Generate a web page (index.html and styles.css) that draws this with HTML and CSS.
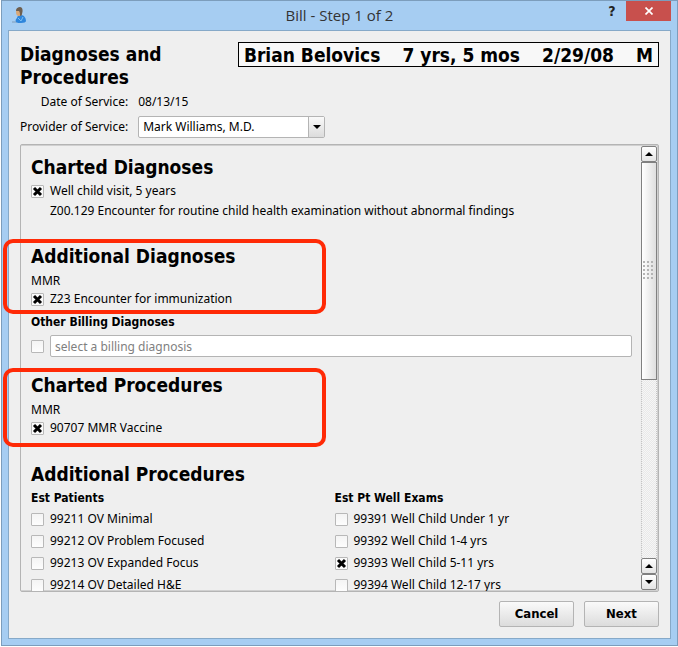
FILE: index.html
```
<!DOCTYPE html>
<html lang="en">
<head>
  <meta charset="UTF-8">
  <meta name="viewport" content="width=device-width, initial-scale=1.0">
  <title>Bill - Step 1 of 2</title>
  <link rel="stylesheet" href="styles.css">
</head>
<body>
<div class="window">
  <header class="titlebar">
    <svg class="app-icon" width="16" height="18" viewBox="0 0 16 18">
      <path d="M0 15h5" stroke="#7f9cba" stroke-width="1"/>
      <path d="M4 15c-1-2 0-3 1-4 0-2 2-3 4-3 3 0 5 3 5 6 0 1-2 2-5 2-2 0-4 0-5-1z" fill="#2f86dc"/>
      <path d="M6 11l3 3 2-4" stroke="#79bdf5" stroke-width="1" fill="none"/>
      <ellipse cx="7" cy="5" rx="3" ry="4" fill="#d9a878"/>
      <path d="M4 4c0-3 2-4 4-4 3 0 3 4 2 7 0 1-1 2-2 2 0-2 0-4-1-5-1 0-2 0-3 0z" fill="#6e5f50"/>
    </svg>
    <span class="title">Bill - Step 1 of 2</span>
    <div class="window-buttons">
      <button class="help" type="button" aria-label="Help">?</button>
      <button class="close" type="button" aria-label="Close">
        <svg width="8" height="8" viewBox="0 0 8 8"><path d="M0.5 0.5l7 7M7.5 0.5l-7 7" stroke="#fff" stroke-width="1.7"/></svg>
      </button>
    </div>
  </header>

  <main class="content">
    <div class="top">
      <h1>Diagnoses and Procedures</h1>
      <div class="patient">
        <span>Brian Belovics</span>
        <span>7 yrs, 5 mos</span>
        <span>2/29/08</span>
        <span>M</span>
      </div>
    </div>

    <div class="fields">
      <span class="label">Date of Service:</span>
      <span>08/13/15</span>
      <label class="label" for="provider">Provider of Service:</label>
      <div class="combo">
        <select id="provider">
          <option>Mark Williams, M.D.</option>
        </select>
        <span class="combo-arrow"><i class="arrow down"></i></span>
      </div>
    </div>

    <div class="panel">
      <div class="list">
        <section class="charted-diagnoses">
          <h2>Charted Diagnoses</h2>
          <label class="row"><input type="checkbox" checked>Well child visit, 5 years</label>
          <p class="detail">Z00.129 Encounter for routine child health examination without abnormal findings</p>
        </section>

        <section class="additional-diagnoses">
          <div class="group">
            <h2>Additional Diagnoses</h2>
            <p>MMR</p>
            <label class="row"><input type="checkbox" checked>Z23 Encounter for immunization</label>
            <div class="highlight"></div>
          </div>
          <h3>Other Billing Diagnoses</h3>
          <div class="billing">
            <input type="checkbox" aria-label="Use other billing diagnosis">
            <input type="text" aria-label="Other billing diagnosis" placeholder="select a billing diagnosis">
          </div>
        </section>

        <section class="charted-procedures group">
          <h2>Charted Procedures</h2>
          <p>MMR</p>
          <label class="row"><input type="checkbox" checked>90707 MMR Vaccine</label>
          <div class="highlight"></div>
        </section>

        <section class="additional-procedures">
          <h2>Additional Procedures</h2>
          <div class="columns">
            <div class="column">
              <h3>Est Patients</h3>
              <label class="row"><input type="checkbox">99211 OV Minimal</label>
              <label class="row"><input type="checkbox">99212 OV Problem Focused</label>
              <label class="row"><input type="checkbox">99213 OV Expanded Focus</label>
              <label class="row"><input type="checkbox">99214 OV Detailed H&amp;E</label>
            </div>
            <div class="column">
              <h3>Est Pt Well Exams</h3>
              <label class="row"><input type="checkbox">99391 Well Child Under 1 yr</label>
              <label class="row"><input type="checkbox">99392 Well Child 1-4 yrs</label>
              <label class="row"><input type="checkbox" checked>99393 Well Child 5-11 yrs</label>
              <label class="row"><input type="checkbox">99394 Well Child 12-17 yrs</label>
            </div>
          </div>
        </section>
      </div>

      <div class="scrollbar">
        <button type="button" aria-label="Scroll up"><i class="arrow up"></i></button>
        <div class="track">
          <div class="thumb"><i class="grip"></i></div>
        </div>
        <button type="button" aria-label="Scroll up"><i class="arrow up"></i></button>
        <button type="button" aria-label="Scroll down"><i class="arrow down"></i></button>
      </div>
    </div>

    <div class="actions">
      <button type="button">Cancel</button>
      <button type="button">Next</button>
    </div>
  </main>
</div>
</body>
</html>
```
FILE: styles.css
```
* {
  box-sizing: border-box;
}

body {
  margin: 0;
  height: 100vh;
  padding: 0 0 1px 1px;
  background-color: #fff;
  font-family: "Noto Sans", Tahoma, sans-serif;
  font-size: 12px;
  line-height: 18px;
  color: #000;
}

h1, h2, h3, p {
  margin: 0;
}

button, input, select {
  font: inherit;
  color: inherit;
  margin: 0;
}

.window {
  height: 100%;
  display: flex;
  flex-direction: column;
  padding: 0 6px 6px;
  border: 1px solid #7c9dbc;
  background-color: #a6cdf2;
}

/* title bar */
.titlebar {
  display: grid;
  grid-template-columns: 1fr auto 1fr;
  height: 29px;
  flex-shrink: 0;
}

.app-icon {
  margin: 6px 0 0 4px;
}

.title {
  font-family: "Open Sans", "Noto Sans", sans-serif;
  font-size: 15px;
  line-height: 29px;
  color: #333;
}

.window-buttons {
  display: flex;
  justify-content: flex-end;
}

.window-buttons button {
  height: 20px;
  padding: 0;
  border: none;
  background: none;
}

.window-buttons .help {
  width: 28px;
  font-family: "DejaVu Sans Condensed", Tahoma, sans-serif;
  font-size: 14px;
  font-weight: bold;
  color: #222;
}

.window-buttons .close {
  width: 45px;
  background-color: #c8504d;
}

/* dialog */
.content {
  flex: 1;
  min-height: 0;
  display: flex;
  flex-direction: column;
  padding: 11px;
  border: 1px solid #86a9c8;
  background-color: #efefef;
}

h1, h2, h3, .patient {
  font-family: "DejaVu Sans Condensed", Tahoma, sans-serif;
  font-size: 19px;
  font-weight: bold;
}

.top {
  display: flex;
  justify-content: space-between;
  align-items: flex-start;
}

h1 {
  width: 200px;
  padding-top: 1px;
  line-height: 23px;
}

.patient {
  display: flex;
  gap: 22px;
  padding: 1px 5px 0;
  border: 1px solid #000;
  background-color: #f8f8f8;
  line-height: 22px;
  white-space: nowrap;
}

.fields {
  display: grid;
  grid-template-columns: auto 1fr;
  column-gap: 10px;
  row-gap: 5px;
  align-items: center;
  margin: 4px 0 6px;
}

.label {
  text-align: right;
}

.combo {
  display: flex;
  width: 187px;
  height: 22px;
  border: 1px solid #b4b4b4;
  border-radius: 2px;
  background-color: #fff;
}

.combo select {
  flex: 1;
  appearance: none;
  padding: 0 4px;
  border: none;
  background: none;
}

.combo-arrow {
  display: flex;
  align-items: center;
  justify-content: center;
  width: 16px;
  border-left: 1px solid #b4b4b4;
  background: linear-gradient(#fafafa, #dcdcdc);
}

.arrow {
  width: 0;
  height: 0;
  border: 4px solid transparent;
}

.arrow.up {
  border-top: none;
  border-bottom-color: #000;
}

.arrow.down {
  border-bottom: none;
  border-top-color: #000;
}

/* list of diagnoses and procedures, cut off at the bottom only */
.panel {
  flex: 1;
  min-height: 0;
  display: flex;
  gap: 9px;
  padding-right: 1px;
  border: 1px solid #b4b4b4;
  border-radius: 2px;
  box-shadow: inset 0 1px #d0d0d0, inset -1px -1px #d0d0d0;
}

.list {
  flex: 1;
  min-width: 0;
  padding: 10px 0 0 10px;
  overflow-x: visible;
  overflow-y: clip;
}

h2 {
  line-height: 24px;
  margin-bottom: 3px;
}

h3 {
  font-size: 12px;
  line-height: 18px;
}

.row {
  display: flex;
  align-items: center;
  gap: 6px;
  width: max-content;
}

input[type="checkbox"] {
  appearance: none;
  flex-shrink: 0;
  width: 13px;
  height: 13px;
  border: 1px solid #b8b8b8;
  border-radius: 1px;
  background: linear-gradient(#f4f4f4, #fdfdfd);
}

input[type="checkbox"]:checked {
  background: #fafafa url("data:image/svg+xml,%3Csvg xmlns='http://www.w3.org/2000/svg' viewBox='0 0 11 11'%3E%3Cpath d='M2 2L9 9M9 2L2 9' stroke='%23000' stroke-width='3'/%3E%3C/svg%3E") center / 11px 11px;
}

.charted-diagnoses .detail {
  margin-top: 2px;
  padding-left: 19px;
}

.additional-diagnoses {
  margin-top: 24px;
}

.additional-diagnoses h3 {
  margin: 5px 0 4px;
}

.billing {
  display: flex;
  align-items: center;
  gap: 6px;
}

.billing input[type="text"] {
  flex: 1;
  height: 22px;
  padding: 0 4px;
  border: 1px solid #b4b4b4;
  border-radius: 2px;
  background-color: #fff;
}

.billing input::placeholder {
  color: #808080;
}

.group {
  position: relative;
}

.group h2 {
  margin-bottom: 4px;
}

.highlight {
  position: absolute;
  top: -5px;
  bottom: -6px;
  left: -28px;
  width: 323px;
  border: 4px solid #ff2a06;
  border-radius: 10px;
  pointer-events: none;
}

.charted-procedures {
  margin-top: 16px;
  padding-bottom: 4px;
}

.additional-procedures {
  margin-top: 21px;
}

.columns {
  display: grid;
  grid-template-columns: 1fr 1fr;
  gap: 6px;
}

.column h3 {
  margin-bottom: 1px;
}

.column .row {
  height: 22px;
}

/* scroll bar */
.scrollbar {
  display: flex;
  flex-direction: column;
  width: 16px;
  padding: 1px 0;
}

.scrollbar button {
  display: flex;
  align-items: center;
  justify-content: center;
  height: 16px;
  padding: 0;
  border: 1px solid #808080;
  border-radius: 2px;
  background: linear-gradient(#fff, #e4e4e4);
}

.track {
  flex: 1;
  border: 1px dotted #c4c4c4;
  border-width: 0 1px;
  background: repeating-conic-gradient(#e9e9e9 0 25%, #f6f6f6 0 50%) 0 0 / 2px 2px;
}

.thumb {
  display: flex;
  align-items: center;
  justify-content: center;
  height: 55%;
  margin: 0 -1px;
  border: 1px solid #808080;
  background: linear-gradient(to right, #fff, #dedede);
}

.grip {
  width: 12px;
  height: 20px;
  background: radial-gradient(circle at 1px 1px, #b4b4b4 1px, transparent 1px) 0 0 / 4px 4px;
}

/* bottom buttons */
.actions {
  display: flex;
  justify-content: flex-end;
  gap: 10px;
  margin-top: 9px;
}

.actions button {
  width: 75px;
  height: 26px;
  padding: 0;
  border: 1px solid #b4b4b4;
  border-radius: 2px;
  background: linear-gradient(#fafafa, #dcdcdc);
  font-family: "DejaVu Sans Condensed", Tahoma, sans-serif;
  font-size: 13px;
  font-weight: bold;
}
```
